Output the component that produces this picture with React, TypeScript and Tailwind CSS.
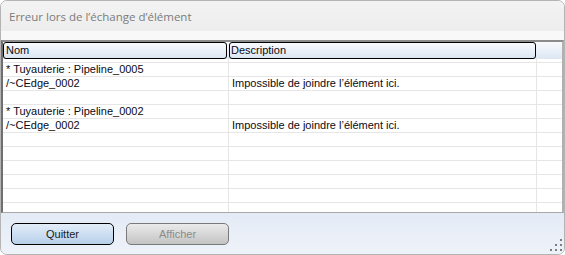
const rows: { nom: string; desc: string }[] = [
  { nom: "* Tuyauterie : Pipeline_0005", desc: "" },
  { nom: "/~CEdge_0002", desc: "Impossible de joindre l’élément ici." },
  { nom: "", desc: "" },
  { nom: "* Tuyauterie : Pipeline_0002", desc: "" },
  { nom: "/~CEdge_0002", desc: "Impossible de joindre l’élément ici." },
  { nom: "", desc: "" },
  { nom: "", desc: "" },
  { nom: "", desc: "" },
  { nom: "", desc: "" },
  { nom: "", desc: "" },
  { nom: "", desc: "" },
];

function ResizeGrip() {
  const dots = [
    [10, 0],
    [5, 5],
    [10, 5],
    [0, 10],
    [5, 10],
    [10, 10],
  ];
  return (
    <svg className="absolute right-[2px] bottom-[3px]" width="12" height="12" viewBox="0 0 12 12">
      {dots.map(([x, y], i) => (
        <rect key={i} x={x} y={y} width="2" height="2" fill="#7d7d7d" />
      ))}
    </svg>
  );
}

export default function App() {
  return (
    <div className="w-[565px] h-[255px] bg-white font-['Liberation_Sans',Arial,sans-serif]">
      <div className="relative h-full flex flex-col rounded-[7px] border border-[#b4b4b4] overflow-hidden bg-[#f0f0f0]">
        {/* Title */}
        <div className="h-[30px] shrink-0 flex items-center pl-[8px] pt-[2px] text-[11.5px] text-[#7b7b7b] font-['Open_Sans',sans-serif] bg-gradient-to-b from-[#f3f3f3] to-[#ededed]">
          Erreur lors de l’échange d’élément
        </div>
        <div className="h-[9px] shrink-0 bg-[#f8f8f8]" />

        {/* Table */}
        <div className="flex-1 flex flex-col bg-white border-t-2 border-t-[#8c8c8c] border-l-2 border-l-[#6f6f6f] border-r-2 border-r-[#b0b0b0] border-b border-b-[#a8a8a8] overflow-hidden text-[11px] text-[#0a0a14]">
          <div className="flex h-[17px] shrink-0 bg-gradient-to-b from-[#f7fafd] to-[#dce7f3]">
            <div className="w-[224px] flex items-center pl-[2px] border border-black rounded-[3px] bg-gradient-to-b from-[#f9fbfe] to-[#dbe6f3]">
              Nom
            </div>
            <div className="w-[307px] ml-[2px] flex items-center pl-[1px] border border-black rounded-[3px] bg-gradient-to-b from-[#f9fbfe] to-[#dbe6f3]">
              Description
            </div>
            <div className="flex-1" />
          </div>
          <div className="h-[3px] shrink-0 flex">
            <div className="w-[226px] border-r border-[#e6e6e6]" />
            <div className="w-[308px] border-r border-[#e6e6e6]" />
          </div>
          {rows.map((r, i) => (
            <div key={i} className="flex h-[14px] shrink-0 border-t border-[#e6e6e6]">
              <div className="w-[226px] pl-[3px] leading-[13px] border-r border-[#e6e6e6] whitespace-nowrap">
                {r.nom}
              </div>
              <div className="w-[308px] pl-[3px] leading-[13px] border-r border-[#e6e6e6] whitespace-nowrap">
                {r.desc}
              </div>
              <div className="flex-1" />
            </div>
          ))}
        </div>

        {/* Footer */}
        <div className="h-[41px] shrink-0 flex gap-[12px] pl-[10px] pt-[10px] bg-gradient-to-b from-[#e4ebf6] to-[#eef2f9] text-[11px]">
          <button className="w-[103px] h-[22px] rounded-[5px] border border-black bg-gradient-to-b from-[#e3edf8] to-[#b7cfea] text-[#1a1a1a]">
            Quitter
          </button>
          <button className="w-[103px] h-[22px] rounded-[5px] border border-[#7a7a7a] bg-gradient-to-b from-[#ebebeb] to-[#c3c3c3] text-[#8c8c8c]">
            Afficher
          </button>
        </div>
        <ResizeGrip />
      </div>
    </div>
  );
}
